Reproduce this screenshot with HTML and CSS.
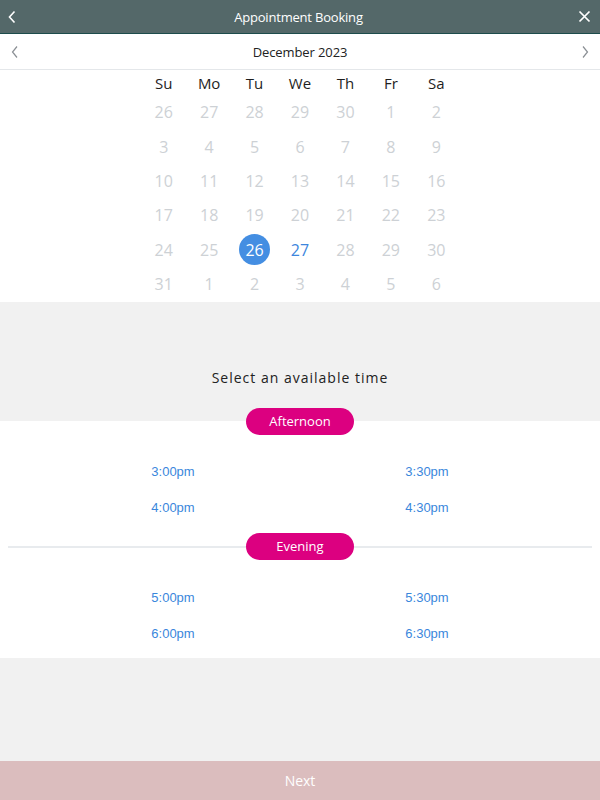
FILE: index.html
```html
<!DOCTYPE html>
<html>
<head>
<meta charset="utf-8">
<link rel="stylesheet" href="styles.css">
</head>
<body>
<div class="app">
  <header class="topbar">
    <button class="icon-btn back" aria-label="Back">
      <svg width="10" height="14" viewBox="0 0 10 14"><path d="M7.5 1.5 L2.5 7 L7.5 12.5" fill="none" stroke="#fff" stroke-width="1.6"/></svg>
    </button>
    <h1 class="title">Appointment Booking</h1>
    <button class="icon-btn close" aria-label="Close">
      <svg width="13" height="13" viewBox="0 0 13 13"><path d="M1.5 1.5 L11.5 11.5 M11.5 1.5 L1.5 11.5" fill="none" stroke="#fff" stroke-width="1.7"/></svg>
    </button>
  </header>

  <div class="monthbar">
    <button class="icon-btn nav" aria-label="Previous month">
      <svg width="10" height="14" viewBox="0 0 10 14"><path d="M7 1.5 L2.5 7 L7 12.5" fill="none" stroke="#8a8f94" stroke-width="1.2"/></svg>
    </button>
    <div class="month">December 2023</div>
    <button class="icon-btn nav" aria-label="Next month">
      <svg width="10" height="14" viewBox="0 0 10 14"><path d="M3 1.5 L7.5 7 L3 12.5" fill="none" stroke="#8a8f94" stroke-width="1.2"/></svg>
    </button>
  </div>

  <div class="calendar">
    <div class="cal-grid weekdays">
      <span>Su</span><span>Mo</span><span>Tu</span><span>We</span><span>Th</span><span>Fr</span><span>Sa</span>
    </div>
    <div class="cal-grid days">
      <span>26</span><span>27</span><span>28</span><span>29</span><span>30</span><span>1</span><span>2</span>
      <span>3</span><span>4</span><span>5</span><span>6</span><span>7</span><span>8</span><span>9</span>
      <span>10</span><span>11</span><span>12</span><span>13</span><span>14</span><span>15</span><span>16</span>
      <span>17</span><span>18</span><span>19</span><span>20</span><span>21</span><span>22</span><span>23</span>
      <span>24</span><span>25</span><span class="selected"><b>26</b></span><span class="available">27</span><span>28</span><span>29</span><span>30</span>
      <span>31</span><span>1</span><span>2</span><span>3</span><span>4</span><span>5</span><span>6</span>
    </div>
  </div>

  <div class="prompt">Select an available time</div>

  <div class="times">
    <div class="period first">
      <div class="pill">Afternoon</div>
      <div class="slots">
        <span>3:00pm</span><span>3:30pm</span>
        <span>4:00pm</span><span>4:30pm</span>
      </div>
    </div>
    <div class="period second">
      <div class="divider"><div class="pill">Evening</div></div>
      <div class="slots">
        <span>5:00pm</span><span>5:30pm</span>
        <span>6:00pm</span><span>6:30pm</span>
      </div>
    </div>
  </div>

  <button class="next">Next</button>
</div>
</body>
</html>
```

FILE: styles.css
```css
* { box-sizing: border-box; }
html, body { margin: 0; padding: 0; }
body {
  font-family: "Open Sans", "Noto Sans", sans-serif;
  background: #f1f1f1;
}
.app {
  width: 600px;
  height: 800px;
  display: flex;
  flex-direction: column;
}
.icon-btn {
  background: none;
  border: 0;
  padding: 0;
  width: 30px;
  height: 30px;
  display: flex;
  align-items: center;
  justify-content: center;
  cursor: pointer;
}
.topbar {
  height: 34px;
  background: #546869;
  border-bottom: 1px solid #1d4c4c;
  display: flex;
  align-items: center;
  justify-content: space-between;
}
.topbar .back { margin-left: -3px; }
.title {
  margin: 0;
  font-size: 13px;
  font-weight: 400;
  color: #fff;
  letter-spacing: -0.2px;
}
.monthbar {
  height: 36px;
  background: #fff;
  border-bottom: 1px solid #e4e7ea;
  display: flex;
  align-items: center;
  justify-content: space-between;
  padding: 1px 0 0 0;
}
.month {
  font-size: 13px;
  color: #222;
  letter-spacing: -0.1px;
}
.calendar {
  background: #fff;
  padding-bottom: 1px;
}
.cal-grid {
  width: 318px;
  margin: 0 auto;
  display: grid;
  grid-template-columns: repeat(7, 1fr);
}
.weekdays span {
  height: 25px;
  display: flex;
  align-items: center;
  justify-content: center;
  font-size: 15px;
  color: #1e1e1e;
  padding-top: 1px;
}
.days span {
  height: 34.4px;
  display: flex;
  align-items: center;
  justify-content: center;
  font-size: 16px;
  color: #cdd1d5;
}
.days .available { color: #3d86dd; }
.days .selected b {
  width: 31px;
  height: 31px;
  border-radius: 50%;
  background: #448ee2;
  color: #fff;
  font-weight: 400;
  display: flex;
  align-items: center;
  justify-content: center;
}
.prompt {
  height: 119px;
  display: flex;
  align-items: flex-end;
  justify-content: center;
  padding-bottom: 34px;
  font-size: 14px;
  letter-spacing: 1px;
  color: #222;
}
.times {
  background: #fff;
  padding-bottom: 7px;
}
.pill {
  width: 108px;
  height: 27px;
  margin: 0 auto;
  border-radius: 14px;
  background: #dc0080;
  color: #fff;
  font-size: 13px;
  display: flex;
  align-items: center;
  justify-content: center;
  padding-bottom: 1px;
}
.period.first .pill { margin-top: -13px; }
.slots {
  width: 508px;
  margin: 0 auto;
  display: grid;
  grid-template-columns: 1fr 1fr;
  padding-top: 18px;
}
.period.second .slots { padding-top: 19px; }
.slots span {
  height: 36px;
  display: flex;
  align-items: center;
  justify-content: center;
  font-family: "Liberation Sans", Arial, sans-serif;
  font-size: 13px;
  color: #3a87dc;
}
.divider {
  margin: 8px 8px 0;
  display: flex;
  align-items: center;
  background: linear-gradient(#e8ebee, #e8ebee) center / 100% 2px no-repeat;
}
.next {
  margin-top: auto;
  height: 39px;
  border: 0;
  background: #dbbdbe;
  color: #fff;
  font-family: "Open Sans", sans-serif;
  font-size: 14px;
  width: 100%;
}
```
